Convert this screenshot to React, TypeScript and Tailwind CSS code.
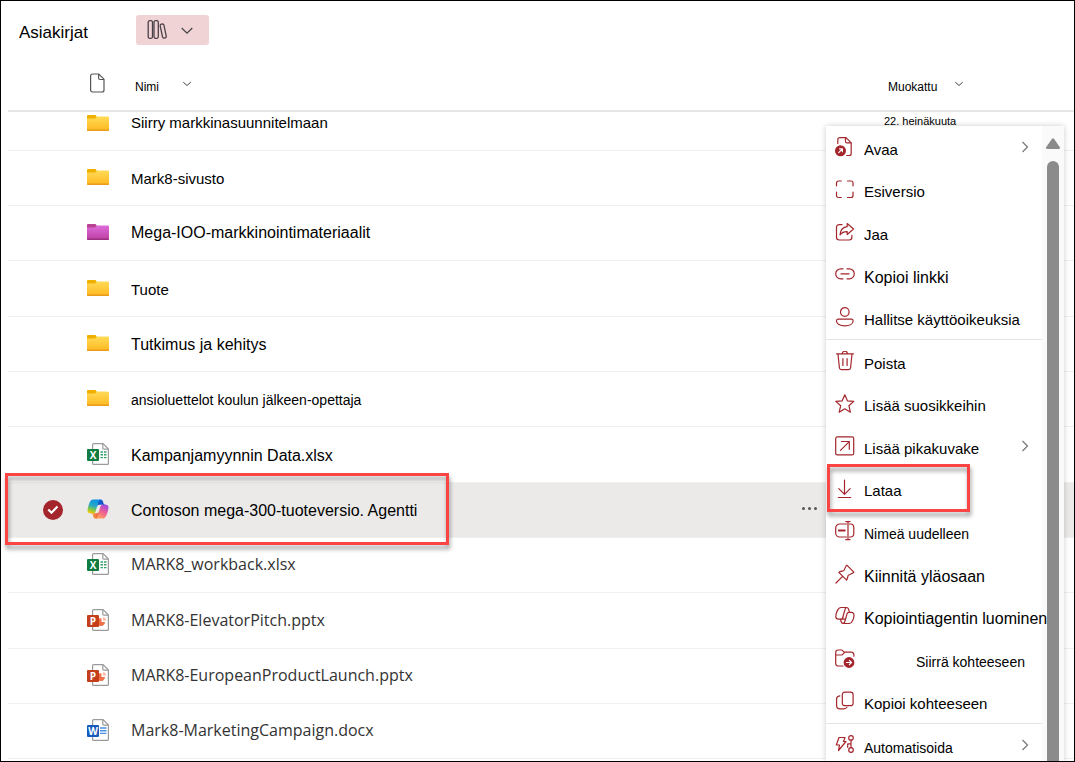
import type { ReactNode } from "react";
import clsx from "clsx";

type FileKind = "folder" | "pinkFolder" | "excel" | "powerpoint" | "word" | "agent";

type FileRow = {
  name: string;
  kind: FileKind;
  text: string;
  modified?: string;
  selected?: boolean;
};

type MenuEntry = {
  label: string;
  icon: ReactNode;
  text?: string;
  submenu?: boolean;
  indent?: boolean;
  marked?: boolean;
};

const SEGOE = "font-['Open_Sans','Noto_Sans',sans-serif] text-base text-[#333333] pb-0.5";

const files: FileRow[] = [
  { name: "Siirry markkinasuunnitelmaan", kind: "folder", text: "text-[15px]", modified: "22. heinäkuuta" },
  { name: "Mark8-sivusto", kind: "folder", text: "pt-0.5 text-[15px]" },
  { name: "Mega-IOO-markkinointimateriaalit", kind: "pinkFolder", text: "text-base" },
  { name: "Tuote", kind: "folder", text: "pt-0.5 text-[15px]" },
  { name: "Tutkimus ja kehitys", kind: "folder", text: "pt-0.5 text-base" },
  { name: "ansioluettelot koulun jälkeen-opettaja", kind: "folder", text: "pt-0.5 text-sm" },
  { name: "Kampanjamyynnin Data.xlsx", kind: "excel", text: "pt-0.5 text-base" },
  { name: "Contoson mega-300-tuoteversio. Agentti", kind: "agent", text: "pt-0.5 text-base", selected: true },
  { name: "MARK8_workback.xlsx", kind: "excel", text: SEGOE },
  { name: "MARK8-ElevatorPitch.pptx", kind: "powerpoint", text: SEGOE },
  { name: "MARK8-EuropeanProductLaunch.pptx", kind: "powerpoint", text: SEGOE },
  { name: "Mark8-MarketingCampaign.docx", kind: "word", text: SEGOE },
];

function MenuIcon({ children }: { children: ReactNode }) {
  return (
    <svg
      viewBox="0 0 20 20"
      className="size-5 shrink-0"
      fill="none"
      stroke="#a4262c"
      strokeWidth="1.2"
      strokeLinecap="round"
      strokeLinejoin="round"
      aria-hidden="true"
    >
      {children}
    </svg>
  );
}

const menuGroups: MenuEntry[][] = [
  [
    {
      label: "Avaa",
      submenu: true,
      icon: (
        <MenuIcon>
          <path d="M2.8 6.5V2.6a2 2 0 0 1 2-2h6.200l5.2 5.2v10.7a2 2 0 0 1-2 2h-2.500" />
          <path d="M10.500.8v3.6a1.5 1.5 0 0 0 1.5 1.5h3.8" />
          <circle cx="5.5" cy="13.8" r="4.900" fill="#a4262c" />
          <path d="M3.7 15.6l3.5-3.5M4.6 11.9h2.8v2.8" stroke="#fff" />
        </MenuIcon>
      ),
    },
    {
      label: "Esiversio",
      icon: (
        <MenuIcon>
          <path d="M1.5 5.800V3a2 2 0 0 1 2-2h2.800M12.500 1h3.500a2 2 0 0 1 2 2v2.800M18 12v3.500a2 2 0 0 1-2 2h-3.500M6.300 17.500H3.500a2 2 0 0 1-2-2V12" />
        </MenuIcon>
      ),
    },
    {
      label: "Jaa",
      icon: (
        <MenuIcon>
          <path d="M7 2.600H4.200A2.700 2.700 0 0 0 1.500 5.300v10a2.700 2.700 0 0 0 2.700 2.700h10a2.700 2.700 0 0 0 2.700-2.700v-2" />
          <path d="M12.200 1.500L18.500 7l-6.300 5.500V9.600c-3.300-.1-5.600 1-7.200 3.200.4-4.500 3-7.700 7.200-8.200z" />
        </MenuIcon>
      ),
    },
    {
      label: "Kopioi linkki",
      text: "text-base",
      icon: (
        <MenuIcon>
          <path d="M8 3.800H5.700a5 5 0 0 0 0 10H8M12 3.800h2.300a5 5 0 0 1 0 10H12M6 8.800h8" />
        </MenuIcon>
      ),
    },
    {
      label: "Hallitse käyttöoikeuksia",
      icon: (
        <MenuIcon>
          <circle cx="9.800" cy="5" r="4.300" />
          <path d="M3.200 12.200h13.200a1.700 1.700 0 0 1 1.700 1.700c0 3-3.500 5-8.300 5s-8.300-2-8.300-5a1.700 1.700 0 0 1 1.700-1.700z" />
        </MenuIcon>
      ),
    },
  ],
  [
    {
      label: "Poista",
      icon: (
        <MenuIcon>
          <path d="M1.500 2.800h17M7.300 2.600a2.500 2.500 0 0 1 5 0M3 3l1.400 13.800a2 2 0 0 0 2 1.800h7.200a2 2 0 0 0 2-1.800L17 3M7.900 7.500v7M12.100 7.500v7" />
        </MenuIcon>
      ),
    },
    {
      label: "Lisää suosikkeihin",
      icon: (
        <MenuIcon>
          <path d="M9.800.8l2.600 6 6.400.6-4.900 4.300 1.500 6.500-5.600-3.400-5.600 3.400 1.500-6.500L.8 7.400l6.400-.6z" />
        </MenuIcon>
      ),
    },
    {
      label: "Lisää pikakuvake",
      submenu: true,
      icon: (
        <MenuIcon>
          <rect x=".7" y=".9" width="18" height="18" rx="1.500" />
          <path d="M5.500 14.300l8.500-8.500M6.500 5.500h7.800v7.800" />
        </MenuIcon>
      ),
    },
    {
      label: "Lataa",
      marked: true,
      icon: (
        <MenuIcon>
          <path d="M9.500 1v14M3.800 9.700l5.700 5.700 5.700-5.700M3.300 18.500h12.400" />
        </MenuIcon>
      ),
    },
    {
      label: "Nimeä uudelleen",
      text: "text-sm",
      icon: (
        <MenuIcon>
          <path d="M11.500 3H4.700a4 4 0 0 0-4 4v5a4 4 0 0 0 4 4h6.800M14.500 3h.8a3.500 3.500 0 0 1 3.500 3.500v6a3.500 3.500 0 0 1-3.500 3.500h-.8M13 .8v17.700M10.800.6H15M10.800 18.700H15" />
          <path d="M3.800 9.500h6" strokeWidth="1.800" />
        </MenuIcon>
      ),
    },
    {
      label: "Kiinnitä yläosaan",
      text: "text-base",
      icon: (
        <MenuIcon>
          <path d="M11.800 1.200l7 7c-.6 1.300-4.600 2-5.600 3.200-.5 1.500-.6 3.500-1.600 4.800L3.800 8.400c1.300-1 3.300-1.100 4.800-1.600 1.200-1 1.900-5 3.200-5.600zM7.300 12.700L1 19" />
        </MenuIcon>
      ),
    },
    {
      label: "Kopiointiagentin luominen",
      text: "text-base",
      icon: (
        <MenuIcon>
          <path d="M6 1.500h5.500c1 0 1.700.6 2 1.500M6 1.500C2.800 1.500.8 7.500.8 10.500c0 1.600 1 2.700 2.700 2.700h2.200c1 0 1.800-.6 2-1.500L10 3.500c.3-1.200.8-2 1.800-2M14.500 17.500H8.300c-1 0-1.700-.6-2-1.500l-1-2.700M14.500 17.500c2.500 0 4.500-5 4.500-8.500 0-1.600-1-2.700-2.700-2.700H14c-1 0-1.800.6-2 1.500l-2.300 8.200c-.3 1-.8 1.500-1.800 1.500M8.200 10.500c-.3 1.800-1 2.700-2.500 2.700h3.500c1 0 1.500-.5 1.800-1.300M13.500 3l1 3.300" />
        </MenuIcon>
      ),
    },
    {
      label: "Siirrä kohteeseen",
      text: "text-sm",
      indent: true,
      icon: (
        <MenuIcon>
          <path d="M8 17H3.300a2.600 2.600 0 0 1-2.600-2.600v-11A2.400 2.400 0 0 1 3.100 1h3.200c1.500 0 2.200 2.200 3.700 2.200h6.300a2.600 2.600 0 0 1 2.600 2.600v1.500M.8 6h5.700c1.500 0 2.200-2.700 3.500-2.700" />
          <circle cx="14" cy="13.500" r="4.800" fill="#a4262c" />
          <path d="M11.500 13.500h4.800M14.400 11.400l2.100 2.100-2.100 2.100" stroke="#fff" />
        </MenuIcon>
      ),
    },
    {
      label: "Kopioi kohteeseen",
      icon: (
        <MenuIcon>
          <rect x="7.300" y="1.200" width="10.800" height="13.500" rx="2.500" />
          <path d="M4.800 4.800C2.800 5 1.600 6.300 1.600 8v6.500a3.300 3.300 0 0 0 3.300 3.300h4c1.500 0 2.500-.6 3-1.500" />
        </MenuIcon>
      ),
    },
  ],
  [
    {
      label: "Automatisoida",
      text: "text-sm",
      submenu: true,
      icon: (
        <MenuIcon>
          <path d="M4 2.500h6L8.500 6.500H11L3.500 15.500l1-5.500H1.300z" />
          <circle cx="16" cy="2.900" r="2.300" />
          <circle cx="16" cy="15" r="2.300" />
          <path d="M16 5.200v7.500M16 8.800h-3.300v3.500" />
        </MenuIcon>
      ),
    },
  ],
];

function Folder({ pink }: { pink?: boolean }) {
  const id = pink ? "folder-pink" : "folder-yellow";
  return (
    <svg viewBox="0 0 22 16" className="h-4 w-[22px]" aria-hidden="true">
      <defs>
        <linearGradient id={id} x1="0" y1="0" x2="0" y2="1">
          <stop offset="0" stopColor={pink ? "#de6bdc" : "#ffdb57"} />
          <stop offset="1" stopColor={pink ? "#bb3f9f" : "#ffb81f"} />
        </linearGradient>
      </defs>
      <path d="M0 1a1 1 0 0 1 1-1h7.500l1.500 2v3H0z" fill={pink ? "#b8428f" : "#f0b000"} />
      <path d="M0 3.500h8l2-2h11a1 1 0 0 1 1 1V15a1 1 0 0 1-1 1H1a1 1 0 0 1-1-1z" fill={`url(#${id})`} />
      <path d="M0 14.500h22v.5a1 1 0 0 1-1 1H1a1 1 0 0 1-1-1z" fill={pink ? "#9c2f80" : "#ea9a1c"} />
    </svg>
  );
}

function OfficeFile({ letter, color, children }: { letter: string; color: string; children: ReactNode }) {
  return (
    <svg viewBox="0 0 22 22" className="size-[22px]" aria-hidden="true">
      <path d="M5.600 1.600a1 1 0 0 1 1-1H16l5.400 5.400v14.400a1 1 0 0 1-1 1H6.600a1 1 0 0 1-1-1z" fill="#fff" stroke="#9a9a9a" strokeWidth="1.200" />
      <path d="M15.800.8v4.400a1 1 0 0 0 1 1h4.400" fill="none" stroke="#9a9a9a" strokeWidth="1.200" />
      {children}
      <rect y="6" width="12" height="12" rx="1" fill={color} />
      <text x="6" y="15.500" textAnchor="middle" fill="#fff" fontSize="10" fontWeight="700" fontFamily="Open Sans, sans-serif">
        {letter}
      </text>
    </svg>
  );
}

function Copilot() {
  return (
    <svg viewBox="1 3 46 42" className="h-5 w-[22px]" aria-hidden="true">
      <defs>
        <linearGradient id="cp-top" x1="0" y1="0" x2="1" y2="1">
          <stop offset="0" stopColor="#0a6cd6" />
          <stop offset="1" stopColor="#1e3fc4" />
        </linearGradient>
        <linearGradient id="cp-bottom" x1="0" y1="0" x2="1" y2="0">
          <stop offset="0" stopColor="#ffb657" />
          <stop offset="1" stopColor="#e8552a" />
        </linearGradient>
        <linearGradient id="cp-left" x1=".6" y1="0" x2=".3" y2="1">
          <stop offset="0" stopColor="#0d91e1" />
          <stop offset=".45" stopColor="#27a8c8" />
          <stop offset=".7" stopColor="#6fc45a" />
          <stop offset="1" stopColor="#f0ca00" />
        </linearGradient>
        <linearGradient id="cp-right" x1=".8" y1="0" x2=".3" y2="1">
          <stop offset="0" stopColor="#a04be8" />
          <stop offset=".5" stopColor="#ee5f93" />
          <stop offset="1" stopColor="#ffa45c" />
        </linearGradient>
      </defs>
      <path fill="url(#cp-top)" d="M34.142 7.325A4.630 4.630 0 0 0 29.700 4H28.350a4.630 4.630 0 0 0-4.554 3.794L21.480 20.407l.575-1.965a4.630 4.630 0 0 1 4.444-3.330h7.853l3.294 1.282 3.175-1.283h-.926a4.630 4.630 0 0 1-4.443-3.325z" />
      <path fill="url(#cp-bottom)" d="M14.330 40.656A4.630 4.630 0 0 0 18.779 44h2.870a4.630 4.630 0 0 0 4.629-4.510l.312-12.163-.654 2.233a4.630 4.630 0 0 1-4.443 3.329h-7.919l-2.823-1.532-3.057 1.532h.912a4.630 4.630 0 0 1 4.447 3.344z" />
      <path fill="url(#cp-left)" d="M29.500 4H13.460c-4.583 0-7.332 6.057-9.165 12.113C2.123 23.290-.720 32.885 7.503 32.885h6.925a4.630 4.630 0 0 0 4.456-3.358 2077 2077 0 0 1 4.971-17.156c.843-2.843 1.544-5.284 2.621-6.805C27.080 4.714 28.086 4 29.500 4z" />
      <path fill="url(#cp-right)" d="M18.498 44h16.040c4.582 0 7.332-6.058 9.165-12.115 2.171-7.177 5.013-16.775-3.208-16.775h-6.926a4.630 4.630 0 0 0-4.455 3.358 2084 2084 0 0 1-4.972 17.160c-.842 2.844-1.544 5.285-2.620 6.806-.604.852-1.610 1.566-3.024 1.566z" />
    </svg>
  );
}

function FileIcon({ kind }: { kind: FileKind }) {
  switch (kind) {
    case "folder":
      return <Folder />;
    case "pinkFolder":
      return <Folder pink />;
    case "agent":
      return <Copilot />;
    case "excel":
      return (
        <OfficeFile letter="X" color="#107c41">
          <path d="M13.500 9h2.500M17 9h2.500M13.500 11.800h2.500M17 11.800h2.500M13.500 14.600h2.500M17 14.600h2.500" stroke="#33a067" strokeWidth="1.400" />
        </OfficeFile>
      );
    case "powerpoint":
      return (
        <OfficeFile letter="P" color="#c43e1c">
          <path d="M12 9.500v7a4 4 0 0 0 6-3.500h-3.500V9.200z" fill="#f0704a" />
          <path d="M16 11.500V8.300a3.300 3.300 0 0 1 3 3.200z" fill="#ffb59c" />
        </OfficeFile>
      );
    case "word":
      return (
        <OfficeFile letter="W" color="#185abd">
          <path d="M13 9h6.500M13 11.700h6.500M13 14.400h6.500" stroke="#4a90e2" strokeWidth="1.400" />
        </OfficeFile>
      );
  }
}

function Chevron({ className, d }: { className: string; d: string }) {
  return (
    <svg viewBox="0 0 12 12" className={className} fill="none" stroke="currentColor" strokeWidth="1.200" aria-hidden="true">
      <path d={d} />
    </svg>
  );
}

// Red frame that points out a step
function Callout({ className }: { className: string }) {
  return (
    <span
      className={clsx(
        "pointer-events-none absolute border-3 border-[#fb4444] drop-shadow-[1px_4px_2px_rgba(0,0,0,0.4)]",
        className
      )}
    />
  );
}

function FileTable() {
  return (
    <table className="w-full table-fixed border-separate border-spacing-0 text-left">
      <thead>
        <tr className="h-14 [&>th]:border-b-2 [&>th]:border-[#e6e6e6] [&>th]:font-normal">
          <th className="w-[67px]" />
          <th className="w-12 pl-[14px]">
            <svg viewBox="0 0 18 20" className="h-5 w-[18px]" fill="none" stroke="#555" strokeWidth="1.200" aria-label="Tyyppi">
              <path d="M1.600 3a2 2 0 0 1 2-2h6.200l5.200 5.200V17a2 2 0 0 1-2 2H3.600a2 2 0 0 1-2-2z" />
              <path d="M9.600 1v4a1.500 1.500 0 0 0 1.500 1.500H15" />
            </svg>
          </th>
          <th className="pl-3">
            <button type="button" className="flex items-center gap-[23px] text-xs">
              <span className="pt-2">Nimi</span>
              <Chevron className="size-2.5 text-[#444]" d="M1.500 5l4.500 4 4.500-4" />
            </button>
          </th>
          <th className="w-[190px] pl-1">
            <button type="button" className="flex items-center gap-[17px] text-xs">
              <span className="pt-2">Muokattu</span>
              <Chevron className="size-2.5 text-[#444]" d="M1.500 5l4.500 4 4.500-4" />
            </button>
          </th>
        </tr>
      </thead>
      <tbody>
        {files.map((file, i) => (
          <tr
            key={file.name}
            className={clsx(
              "relative [&>td]:border-b [&>td]:border-[#efefef]",
              i === 0 ? "h-[39px] [&>td]:pb-4" : "h-[55px] nth-[3n+1]:h-14",
              file.selected && "bg-[#ebeae9]"
            )}
          >
            <td className="pl-[35px]">
              {file.selected && (
                <span className="relative block size-5">
                  <input
                    type="checkbox"
                    defaultChecked
                    aria-label={file.name}
                    className="block size-5 appearance-none rounded-full bg-[#a4262c]"
                  />
                  <svg viewBox="0 0 20 20" className="pointer-events-none absolute inset-0" fill="none" stroke="#fff" strokeWidth="2.200">
                    <path d="M5.300 9.500l3.200 3.200 6-6.200" />
                  </svg>
                </span>
              )}
            </td>
            <td className="pb-0.5 pl-3">
              <FileIcon kind={file.kind} />
            </td>
            <td className="pr-[67px] pl-2">
              <div className="flex items-center justify-between">
                <a href="#" className={clsx("whitespace-nowrap leading-[22px]", file.text)}>
                  {file.name}
                </a>
                {file.selected && (
                  <button type="button" aria-label="Lisää toimintoja" className="flex gap-[3px] pb-1">
                    <span className="size-[3px] rounded-full bg-[#555]" />
                    <span className="size-[3px] rounded-full bg-[#555]" />
                    <span className="size-[3px] rounded-full bg-[#555]" />
                  </button>
                )}
              </div>
              {file.selected && <Callout className="-top-[10px] -bottom-[7px] -left-[3px] w-[444px]" />}
            </td>
            <td className="align-top text-[11px] leading-[19px]">{file.modified}</td>
          </tr>
        ))}
      </tbody>
    </table>
  );
}

function ContextMenu() {
  return (
    <div className="absolute top-[125px] right-[10px] bottom-0 flex w-[238px] overflow-hidden bg-white shadow-[0_0_6px_rgba(0,0,0,0.2)]">
      <div className="min-w-0 flex-1">
        {menuGroups.map((group, i) => (
          <ul key={i} className="border-b border-[#e4e4e4] pb-px last:border-b-0">
            {group.map((entry) => (
              <li key={entry.label} className="relative h-[42px] even:h-[43px]">
                <button type="button" className="flex h-full w-full items-center gap-[9px] pr-[11px] pl-[9px] text-left">
                  {entry.icon}
                  <span
                    className={clsx(
                      "flex-1 pt-[6px] whitespace-nowrap",
                      entry.text ?? "text-[15px]",
                      entry.indent && "pl-[52px]"
                    )}
                  >
                    {entry.label}
                  </span>
                  {entry.submenu && <Chevron className="size-3 text-[#777]" d="M3.500 1l5 5-5 5" />}
                </button>
                {entry.marked && <Callout className="-top-[3px] -bottom-[2px] left-px w-[143px]" />}
              </li>
            ))}
          </ul>
        ))}
      </div>
      <div className="flex w-[22px] flex-col items-center gap-3 bg-[#fafafa] pt-3">
        <svg viewBox="0 0 14 11" className="h-[11px] w-[14px] shrink-0" fill="#8b8b8b" aria-hidden="true">
          <path d="M6 .8a1.300 1.300 0 0 1 2 0l5.700 8.200a1.200 1.200 0 0 1-1 2H1.300a1.200 1.200 0 0 1-1-2z" />
        </svg>
        <div className="w-3 flex-1 rounded-t-full bg-[#8b8b8b]" />
      </div>
    </div>
  );
}

export default function App() {
  return (
    <main className="relative h-screen overflow-hidden border border-black bg-white pl-[7px] font-['Liberation_Sans',Arial,sans-serif] text-black">
      <header className="flex h-[55px] items-start gap-12 pt-[14px] pl-[11px]">
        <h1 className="pt-[6px] text-[17px] leading-6">Asiakirjat</h1>
        <button
          type="button"
          aria-label="Kirjastot"
          className="flex h-[30px] w-[73px] items-center gap-3 rounded-[3px] bg-[#efd3d5] pl-[11px] text-[#444]"
        >
          <svg viewBox="0 0 22 20" className="h-5 w-[22px]" fill="none" stroke="#4a4048" strokeWidth="1.300" aria-hidden="true">
            <rect x="1.200" y=".7" width="4.300" height="17.600" rx="1.500" />
            <rect x="7" y=".7" width="4.300" height="17.600" rx="1.500" />
            <rect x="14.300" y="4" width="3.800" height="14.200" rx="1.500" transform="rotate(-12 16 11)" />
          </svg>
          <Chevron className="size-3" d="M.7 4L6 9.200l5.300-5.200" />
        </button>
      </header>
      <FileTable />
      <ContextMenu />
    </main>
  );
}
